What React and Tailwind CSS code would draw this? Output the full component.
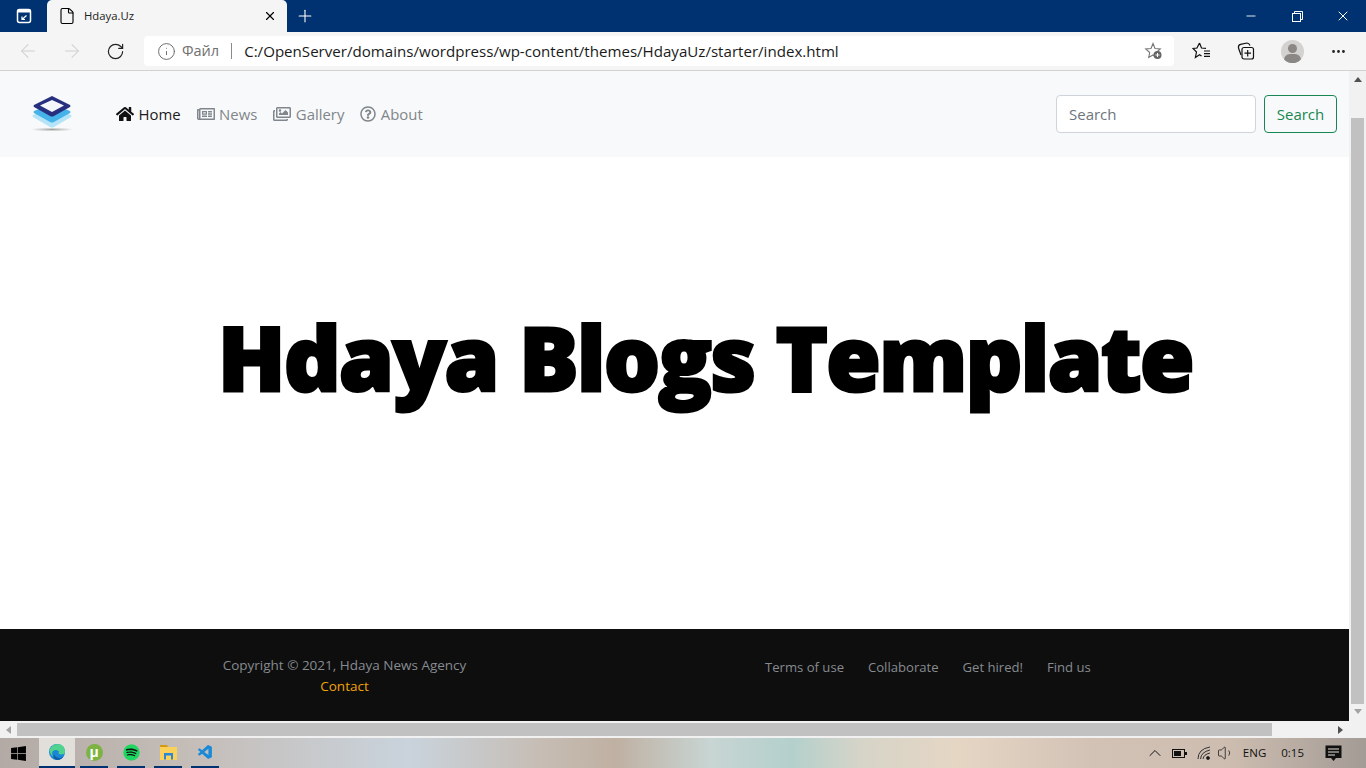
import { ArrowLeft, ArrowRight, RotateCw, Info, File, X, Plus, Minus, MoreHorizontal, ChevronUp, Volume1 } from 'lucide-react';
import { FaHome, FaRegNewspaper, FaRegImages, FaRegQuestionCircle, FaWindows, FaSpotify } from 'react-icons/fa';
import { VscVscode } from 'react-icons/vsc';

function NavLink({ icon, label, active }) {
  return (
    <a className={`flex items-center gap-[4.5px] text-[14.9px] ${active ? 'text-[#1a1a1a]' : 'text-[#80868b]'}`}>
      {icon}
      <span>{label}</span>
    </a>
  );
}

function TitleBar() {
  return (
    <div className="h-8 bg-[#003271] flex items-stretch shrink-0">
      <div className="w-[47px] flex items-center justify-center">
        <svg width="16" height="16" viewBox="0 0 16 16">
          <rect x="1.5" y="1.5" width="13" height="13" rx="2" fill="none" stroke="#fff" strokeWidth="1.5" />
          <rect x="1.5" y="1.5" width="13" height="3" fill="#fff" />
          <path d="M10.5 7.5 L6 11.5 M6 8.5 V11.5 H9" stroke="#fff" strokeWidth="1.2" fill="none" />
        </svg>
      </div>
      <div className="w-[240px] bg-[#f5f5f5] rounded-t-[5px] flex items-center pl-[11px] pr-[10px]">
        <File size={18} strokeWidth={1.5} className="text-black" />
        <span className="ml-[8px] text-[11.3px] text-[#222] flex-1">Hdaya.Uz</span>
        <X size={14} strokeWidth={2} className="text-black" />
      </div>
      <div className="w-[35px] flex items-center justify-center">
        <Plus size={20} strokeWidth={1.3} className="text-white" />
      </div>
      <div className="flex-1" />
      <div className="w-[46px] flex items-center justify-center">
        <Minus size={14} strokeWidth={1.5} className="text-white" />
      </div>
      <div className="w-[46px] flex items-center justify-center">
        <svg width="11" height="11" viewBox="0 0 11 11" fill="none" stroke="#fff">
          <rect x="0.5" y="2.5" width="8" height="8" />
          <path d="M2.5 2.5 V0.5 H10.5 V8.5 H8.5" />
        </svg>
      </div>
      <div className="w-[46px] flex items-center justify-center">
        <X size={16} strokeWidth={1.5} className="text-white" />
      </div>
    </div>
  );
}

function ToolBar() {
  return (
    <div className="h-[39px] bg-[#f5f5f5] border-b border-[#d2d2d2] flex items-center shrink-0">
      <div className="w-[144px] flex items-center pl-[17px]">
        <ArrowLeft size={22} strokeWidth={1.1} className="text-[#cfcfcf]" />
        <ArrowRight size={22} strokeWidth={1.1} className="text-[#cfcfcf] ml-[22px]" />
        <RotateCw size={19} strokeWidth={1.5} className="text-[#222] ml-[23px]" />
      </div>
      <div className="w-[1030px] h-[30px] bg-white rounded-[4px] flex items-center pl-[13px] pr-[10px]">
        <Info size={19} strokeWidth={1.2} className="text-[#666]" />
        <span className="ml-[6px] text-[14.5px] text-[#707070]">Файл</span>
        <span className="w-px h-[16px] bg-[#8a8a8a] ml-[12px]" />
        <span className="ml-[12px] text-[15.1px] text-[#1a1a1a]">C:/OpenServer/domains/wordpress/wp-content/themes/HdayaUz/starter/index.html</span>
        <svg className="ml-auto" width="20" height="20" viewBox="0 0 20 20">
          <path d="M9 2.5 L11 7.5 L16.3 8 L12.3 11.5 L13.3 16.5 L9 14 L4.7 16.5 L5.7 11.5 L1.7 8 L7 7.5 Z" fill="none" stroke="#777" strokeWidth="1.1" />
          <circle cx="13.5" cy="14" r="4" fill="#666" />
          <path d="M11.5 14 H15.5 M13.5 12 V16" stroke="#fff" strokeWidth="1" />
        </svg>
      </div>
      <div className="flex items-center flex-1">
        <svg className="ml-[18px]" width="20" height="20" viewBox="0 0 20 20" fill="none" stroke="#111" strokeWidth="1.2">
          <path d="M7.5 2 L9.5 7 L14 7.3 M5.5 7 L1 7.5 L4.5 11 L3.4 16.5 L7.5 13.7 L9.5 15 M4.8 7.2 L7.5 2" />
          <path d="M12 10 H18 M12 12.7 H18 M12 15.3 H18" />
        </svg>
        <svg className="ml-[24px]" width="20" height="20" viewBox="0 0 20 20" fill="none" stroke="#111" strokeWidth="1.2">
          <path d="M5 14 L2.5 7 Q2 4 4.5 3.3 L11 2 Q13 2 14 4.5" />
          <rect x="6" y="6.5" width="11.5" height="11.5" rx="2" />
          <path d="M11.7 9 V15.5 M8.5 12.2 H15" />
        </svg>
        <div className="ml-[25px] w-[23px] h-[23px] rounded-full bg-[#d4d2d0] overflow-hidden relative">
          <div className="absolute left-[7px] top-[4px] w-[9px] h-[9px] rounded-full bg-[#8a8784]" />
          <div className="absolute left-[3px] top-[14px] w-[17px] h-[12px] rounded-full bg-[#8a8784]" />
        </div>
        <MoreHorizontal size={17} strokeWidth={2} className="text-[#222] ml-[26px]" />
      </div>
    </div>
  );
}

function Logo() {
  return (
    <svg width="46" height="38" viewBox="0 0 46 38">
      <defs>
        <radialGradient id="shadow">
          <stop offset="0%" stopColor="#777" stopOpacity="0.7" />
          <stop offset="100%" stopColor="#999" stopOpacity="0" />
        </radialGradient>
      </defs>
      <ellipse cx="23" cy="34.5" rx="22" ry="2" fill="url(#shadow)" />
      <path d="M23 13 Q24 13 42 20 Q43 21 42 22 L25 32 Q23 33 21 32 L4 22 Q3 21 4 20 Q22 13 23 13 Z" fill="#b5e4f8" />
      <path d="M23 9 L41 16 Q42 17 41 18 L25 27 Q23 28 21 27 L5 18 Q4 17 5 16 Z" fill="#45b3ea" />
      <path d="M23 1 L41 10 Q42 11 41 12 L25 21 Q23 22 21 21 L5 12 Q4 11 5 10 Z" fill="#26307f" />
      <path d="M23 5 L35 10.5 L23 17 L11 10.5 Z" fill="#f4f6fb" />
    </svg>
  );
}

function Navbar() {
  return (
    <div className="h-[86px] bg-[#f8f9fa] flex items-center pl-[29px] pr-[12px]">
      <Logo />
      <div className="flex items-center gap-[16px] ml-[41px]">
        <NavLink active label="Home" icon={<FaHome size={18} className="text-[#111]" />} />
        <NavLink label="News" icon={<FaRegNewspaper size={18} />} />
        <NavLink label="Gallery" icon={<FaRegImages size={18} />} />
        <NavLink label="About" icon={<FaRegQuestionCircle size={16} />} />
      </div>
      <div className="ml-auto flex items-center gap-[8px]">
        <div className="w-[200px] h-[38px] bg-white border border-[#ced4da] rounded-[4px] flex items-center px-[12px] text-[15px] text-[#6c757d]">
          Search
        </div>
        <div className="h-[38px] w-[73px] border border-[#198754] rounded-[4px] flex items-center justify-center text-[15px] text-[#198754]">
          Search
        </div>
      </div>
    </div>
  );
}

function Footer() {
  return (
    <div className="h-[92px] bg-[#0e0e0e] flex text-[13.5px] text-[#868b90] pl-[222px]">
      <div className="w-[245px] flex flex-col items-center pt-[26px]">
        <span className="whitespace-nowrap">Copyright © 2021, Hdaya News Agency</span>
        <span className="mt-[1px] text-[#f0a30a]">Contact</span>
      </div>
      <div className="ml-[298px] pt-[29px] flex gap-[24px] text-[13.1px]">
        <span>Terms of use</span>
        <span>Collaborate</span>
        <span>Get hired!</span>
        <span>Find us</span>
      </div>
    </div>
  );
}

function Taskbar() {
  return (
    <div className="h-[30px] shrink-0 flex items-stretch bg-[linear-gradient(90deg,#b3aaa5_0%,#c5bdb8_14%,#c9d3dc_30%,#c6bcb3_40%,#bfb0a2_45%,#c8d5d3_52%,#b4d0cc_58%,#d6d4c8_63%,#e5d6c4_70%,#d2c2b6_80%,#cdbdb0_90%,#a39b95_100%)]">
      <div className="w-[37px] flex items-center justify-center">
        <FaWindows size={17} className="text-black" />
      </div>
      <div className="ml-[2px] w-[36px] bg-[#e2deda] border-b-[2px] border-[#003271] flex items-center justify-center">
        <svg width="18" height="18" viewBox="0 0 18 18">
          <circle cx="9" cy="9" r="8" fill="#1b86d6" />
          <path d="M1.5 7 Q4 1 10 1 Q17 1.5 17 9 Q17 11.5 13 11.5 Q9.5 11.5 11 8.5 Q8 6 5 8 Q3 10 5.5 14 Q2 12 1.5 7Z" fill="#4fd38d" />
          <path d="M6 11 Q7 15 12 15 Q14 15 16 13 Q13 17.5 8.5 17 Q4 15 6 11Z" fill="#0c5fa8" />
        </svg>
      </div>
      <div className="w-[5px]" />
      <div className="w-[28px] border-b-[2px] border-[#003271] flex items-center justify-center">
        <div className="w-[17px] h-[17px] rounded-full bg-[#7cb342] flex items-center justify-center text-white text-[14px] font-bold leading-none">µ</div>
      </div>
      <div className="w-[9px]" />
      <div className="w-[28px] border-b-[2px] border-[#003271] flex items-center justify-center">
        <FaSpotify size={17} className="text-[#1ed760]" style={{ background: 'radial-gradient(circle, #111 55%, transparent 60%)', borderRadius: '50%' }} />
      </div>
      <div className="w-[9px]" />
      <div className="w-[28px] border-b-[2px] border-[#003271] flex items-center justify-center">
        <svg width="17" height="15" viewBox="0 0 17 15">
          <path d="M0 0 H7 L8 2 H0 Z" fill="#d69a12" />
          <rect y="2" width="17" height="13" fill="#fbd15c" />
          <path d="M4 14.5 V8 H13 V14.5 H11 V10.5 H6 V14.5 Z" fill="#2c87d6" />
        </svg>
      </div>
      <div className="w-[9px]" />
      <div className="w-[28px] border-b-[2px] border-[#003271] flex items-center justify-center">
        <VscVscode size={17} className="text-[#1a8ad8]" />
      </div>
      <div className="flex-1" />
      <div className="flex items-center text-[11.5px] text-[#111] pr-[24px]">
        <ChevronUp size={20} strokeWidth={1.2} />
        <svg className="ml-[7px]" width="15" height="9" viewBox="0 0 15 9">
          <rect x="0.5" y="0.5" width="12" height="8" fill="none" stroke="#111" />
          <rect x="2" y="2" width="7" height="5" fill="#111" />
          <rect x="13" y="3" width="2" height="3" fill="#111" />
        </svg>
        <svg className="ml-[10px]" width="14" height="14" viewBox="0 0 14 14" fill="none" stroke="#333" strokeWidth="1">
          <path d="M1 13 Q1 3 13 1 M3.5 13 Q4 6 13 4 M6 13 Q6.5 8.5 13 7" />
          <circle cx="11" cy="12" r="1.5" fill="#111" />
        </svg>
        <Volume1 className="ml-[6px]" size={18} strokeWidth={1} />
        <span className="ml-[8px]">ENG</span>
        <span className="ml-[15px]">0:15</span>
        <svg className="ml-[21px]" width="17" height="17" viewBox="0 0 17 17">
          <path d="M0.5 0.5 H16.5 V13 H11 L8.5 16 L6 13 H0.5 Z" fill="#111" />
          <path d="M3 4 H14 M3 7 H14 M3 10 H10" stroke="#e8e0d8" strokeWidth="1" />
        </svg>
      </div>
    </div>
  );
}

export default function App() {
  return (
    <div className='w-[1366px] h-[768px] overflow-hidden flex flex-col bg-white font-["Open_Sans","Noto_Sans",sans-serif]'>
      <TitleBar />
      <ToolBar />
      <div className="flex-1 flex min-h-0">
        <div className="flex-1 flex flex-col min-w-0">
          <Navbar />
          <div className="flex-1 flex items-center justify-center pl-[62px] pb-[72px]">
            <h1 className='font-["Open_Sans",sans-serif] font-extrabold text-[88px] tracking-[-1.5px] leading-none text-black whitespace-nowrap [-webkit-text-stroke:3px_#000]'>
              Hdaya Blogs Template
            </h1>
          </div>
          <Footer />
          {/* horizontal scrollbar */}
          <div className="h-[17px] bg-[#f1f1f1] flex items-center shrink-0">
            <span className="w-[17px] flex justify-center">
              <span className="border-y-[4px] border-y-transparent border-r-[5px] border-r-[#a3a3a3]" />
            </span>
            <span className="w-[1255px] h-[13px] bg-[#c1c1c1]" />
            <span className="flex-1 flex justify-end pr-[6px]">
              <span className="border-y-[4px] border-y-transparent border-l-[5px] border-l-[#505050]" />
            </span>
          </div>
        </div>
        {/* vertical scrollbar */}
        <div className="w-[17px] bg-[#f1f1f1] flex flex-col items-center shrink-0">
          <span className="mt-[6px] border-x-[4px] border-x-transparent border-b-[5px] border-b-[#505050]" />
          <span className="mt-[36px] w-[13px] h-[586px] bg-[#c1c1c1]" />
          <span className="mt-[5px] border-x-[4px] border-x-transparent border-t-[5px] border-t-[#a3a3a3]" />
        </div>
      </div>
      <Taskbar />
    </div>
  );
}
